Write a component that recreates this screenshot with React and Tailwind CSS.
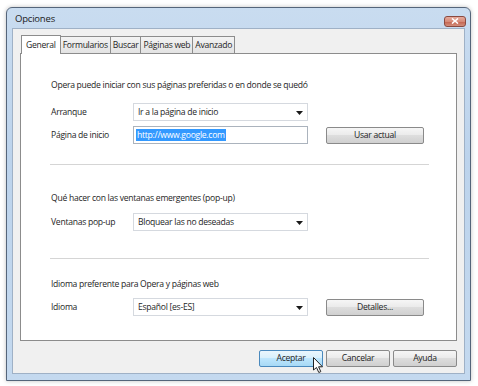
import React from "react";

const font = { fontFamily: '"Open Sans", "Noto Sans", sans-serif' };

function Arrow() {
  return (
    <svg width="7" height="4" viewBox="0 0 7 4" className="absolute right-[4px] top-[7px]">
      <path d="M0 0 L7 0 L3.5 4 Z" fill="#1a1a1a" />
    </svg>
  );
}

function Select({ value }) {
  return (
    <div className="relative w-[175px] h-[18px] bg-white border border-[#d5d9df] flex items-center pl-[4px]">
      {value}
      <Arrow />
    </div>
  );
}

function Btn({ children, w = "w-[98px]", hot = false }) {
  return (
    <div
      className={
        "h-[17px] rounded-[2px] border flex items-center justify-center text-[#1e1e1e] " +
        w +
        (hot
          ? " border-[#4a89bd] bg-[linear-gradient(#eaf6fd_0%,#d9f0fc_45%,#bee6fd_50%,#a7d9f5_100%)]"
          : " border-[#8a8a8a] bg-[linear-gradient(#f6f6f6_0%,#ebebeb_45%,#dddddd_50%,#d0d0d0_100%)]")
      }
    >
      {children}
    </div>
  );
}

function Row({ label, children, mt }) {
  return (
    <div className={"flex items-center " + mt}>
      <div className="w-[82px]">{label}</div>
      {children}
    </div>
  );
}

export default function App() {
  return (
    <div className="w-[478px] h-[386px] bg-white relative text-[8.6px] tracking-[-0.28px] text-[#1e1e1e]" style={font}>
      <div className="absolute left-[6px] top-[7px] w-[465px] h-[374px] rounded-t-[6px] border border-[#55657a] bg-[linear-gradient(#c9dcf0,#bcd3ec_40%,#c4d9ef)] flex flex-col shadow-[0_0_4px_rgba(0,0,0,0.25)]">
        {/* title bar */}
        <div className="h-[20px] flex items-center justify-between pl-[8px] pr-[4px] shrink-0">
          <span className="text-[9.5px] tracking-[-0.2px] text-[#1a1a1a] mt-[3px]">Opciones</span>
          <div className="w-[22px] h-[11px] mt-[6px] rounded-[3px] border border-[#8a4a40] bg-[linear-gradient(#e6aa9c,#d68a78_50%,#c4624e_51%,#d28e7c)] flex items-center justify-center">
            <svg width="8" height="6" viewBox="0 0 8 6">
              <path d="M1 0.5 L7 5.5 M7 0.5 L1 5.5" stroke="white" strokeWidth="1.6" />
            </svg>
          </div>
        </div>
        {/* client */}
        <div className="ml-[5px] mr-[5px] mb-[6px] flex-1 bg-[#f0f0f0] border border-[#9fb1c6] flex flex-col pl-[7px] pt-[5px]">
          {/* tabs */}
          <div className="flex items-end h-[19px] pl-[1px]">
            <div className="h-[19px] px-[4px] bg-white border border-b-0 border-[#8c8c8c] flex items-center relative z-10 -mb-[1px]">General</div>
            <div className="h-[17px] px-[2px] bg-[linear-gradient(#f3f3f3,#e3e3e3)] border border-l-0 border-b-0 border-[#8c8c8c] flex items-center">Formularios</div>
            <div className="h-[17px] px-[2px] bg-[linear-gradient(#f3f3f3,#e3e3e3)] border border-l-0 border-b-0 border-[#8c8c8c] flex items-center">Buscar</div>
            <div className="h-[17px] px-[2px] bg-[linear-gradient(#f3f3f3,#e3e3e3)] border border-l-0 border-b-0 border-[#8c8c8c] flex items-center">Páginas web</div>
            <div className="h-[17px] px-[2px] bg-[linear-gradient(#f3f3f3,#e3e3e3)] border border-l-0 border-b-0 border-[#8c8c8c] flex items-center">Avanzado</div>
          </div>
          {/* panel */}
          <div className="w-[437px] h-[288px] bg-white border border-[#8c8c8c] flex flex-col pl-[29px]">
            <div className="h-[14px] leading-[14px] mt-[24px] pl-[1px]">Opera puede iniciar con sus páginas preferidas o en donde se quedó</div>
            <div className="pl-[1px]">
              <Row label="Arranque" mt="mt-[11px]">
                <Select value="Ir a la página de inicio" />
              </Row>
              <Row label="Página de inicio" mt="mt-[5px]">
                <div className="w-[175px] h-[18px] bg-white border border-[#abb3bd] flex items-center pl-[2px]">
                  <span className="bg-[#3399ff] text-white px-[1px] leading-[12px]">http://www.google.com</span>
                </div>
                <div className="ml-[18px]"><Btn>Usar actual</Btn></div>
              </Row>
            </div>
            <div className="w-[379px] h-[2px] border-t border-[#d5d5d5] bg-white mt-[20px]" />
            <div className="h-[14px] leading-[14px] mt-[25px] pl-[1px]">Qué hacer con las ventanas emergentes (pop-up)</div>
            <div className="pl-[1px]">
              <Row label="Ventanas pop-up" mt="mt-[8px]">
                <Select value="Bloquear las no deseadas" />
              </Row>
            </div>
            <div className="w-[379px] h-[2px] border-t border-[#d5d5d5] bg-white mt-[27px]" />
            <div className="h-[14px] leading-[14px] mt-[17px] pl-[1px]">Idioma preferente para Opera y páginas web</div>
            <div className="pl-[1px]">
              <Row label="Idioma" mt="mt-[7px]">
                <Select value="Español [es-ES]" />
                <div className="ml-[18px]"><Btn>Detalles...</Btn></div>
              </Row>
            </div>
          </div>
          {/* bottom buttons */}
          <div className="flex justify-end gap-[3px] w-[437px] mt-[9px]">
            <Btn w="w-[64px]" hot>Aceptar</Btn>
            <Btn w="w-[64px]">Cancelar</Btn>
            <Btn w="w-[64px]">Ayuda</Btn>
          </div>
        </div>
      </div>
      {/* mouse cursor */}
      <svg width="12" height="18" viewBox="0 0 12 18" className="absolute left-[313px] top-[357px]">
        <path d="M0.5 0.5 L0.5 13 L3.5 10.5 L5.8 15.5 L7.8 14.6 L5.6 9.8 L9.5 9.8 Z" fill="white" stroke="#222" strokeWidth="1" strokeLinejoin="round" />
      </svg>
    </div>
  );
}
